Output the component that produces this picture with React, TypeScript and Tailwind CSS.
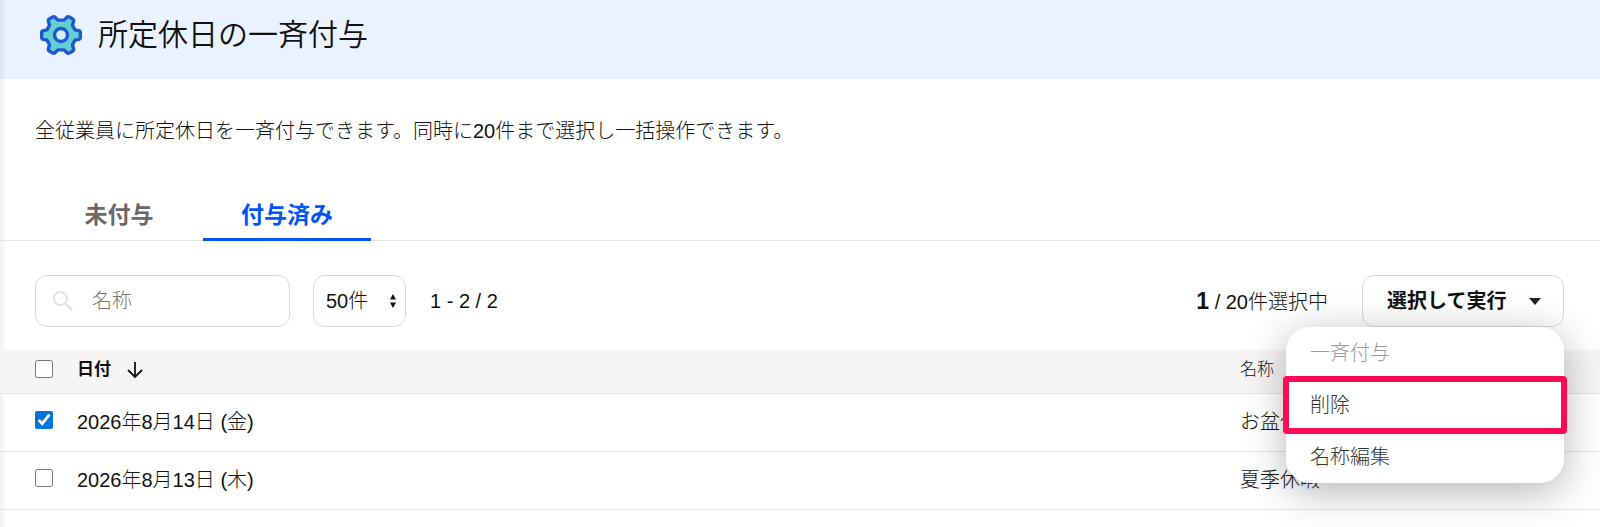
import { useState } from "react";

interface Holiday {
  id: number;
  date: string;
  name: string;
}

const holidays: Holiday[] = [
  { id: 1, date: "2026年8月14日 (金)", name: "お盆休み" },
  { id: 2, date: "2026年8月13日 (木)", name: "夏季休暇" },
];

const GearIcon = () => (
  <svg viewBox="0 0 42 42" className="size-[42px]" fill="none" stroke="#1f57cf" strokeWidth="3.4" strokeLinejoin="round" aria-hidden="true">
    <path
      fill="#62d0d2"
      d="M35 15.8 L38.8 16.6 Q40.3 17 40.3 18.5 V23.5 Q40.3 25 38.8 25.4 L35 26.2 L32.4 30.8 L33.6 34.8 Q34 36.2 32.7 37 L29.2 39.1 Q28 39.7 27 38.7 L24.1 35.9 H17.9 L15 38.7 Q14 39.7 12.8 39.1 L9.3 37 Q8 36.2 8.4 34.8 L9.6 30.8 L7 26.2 L3.2 25.4 Q1.7 25 1.7 23.5 V18.5 Q1.7 17 3.2 16.6 L7 15.8 L9.6 11.2 L8.4 7.2 Q8 5.8 9.3 5 L12.8 2.9 Q14 2.3 15 3.3 L17.9 6.1 H24.1 L27 3.3 Q28 2.3 29.2 2.9 L32.7 5 Q34 5.8 33.6 7.2 L32.4 11.2 Z"
    />
    <circle cx="21" cy="21" r="6.5" fill="#d0f2f3" />
  </svg>
);

const Header = () => (
  <header className="flex h-[79px] items-start gap-4 bg-[#eaf2ff] pt-3.5 pl-10 shadow-[inset_8px_0_8px_-8px_rgba(0,0,0,0.12)]">
    <GearIcon />
    <h1 className="text-[30px] leading-[42px] font-[350]">所定休日の一斉付与</h1>
  </header>
);

const Tabs = () => (
  <nav className="mt-[46px] flex h-[49px] border-b border-[#e5e5e5] pl-[35px] text-[23px] leading-[46px] font-bold">
    <a href="#pending" className="w-[168px] text-center text-[#6b6765]">
      未付与
    </a>
    <a href="#granted" className="-mb-px w-[168px] border-b-[3px] border-[#0055f5] text-center text-[#0055f5]">
      付与済み
    </a>
  </nav>
);

const ActionMenu = () => (
  <div className="relative ml-[34px]">
    <button type="button" aria-haspopup="menu" aria-expanded="true" className="flex h-[52px] w-[202px] items-center justify-between rounded-xl border border-[#d9d9d9] pr-[22px] pl-6 font-bold">
      選択して実行
      <svg viewBox="0 0 12 7" className="h-[7px] w-3" fill="#222" aria-hidden="true">
        <path d="M0 0H12L6 7Z" />
      </svg>
    </button>
    <ul className="absolute top-full right-0 z-10 w-[278px] rounded-3xl bg-white text-[#333] shadow-[0_8px_40px_rgba(0,0,0,0.3)]">
      <li>
        <button type="button" disabled className="h-[52px] w-full px-6 text-left font-light text-[#999]">
          一斉付与
        </button>
      </li>
      <li className="relative">
        <button type="button" className="h-[52px] w-full px-6 text-left font-light">
          削除
        </button>
        <span className="pointer-events-none absolute -inset-[3px] rounded border-[6px] border-[#ff0a54]" />
      </li>
      <li>
        <button type="button" className="h-[52px] w-full px-6 text-left font-light">
          名称編集
        </button>
      </li>
    </ul>
  </div>
);

const Toolbar = () => (
  <div className="mt-[34px] flex items-center pr-9 pl-[35px]">
    <div className="relative">
      <svg viewBox="0 0 20 20" className="absolute top-4 left-[18px] size-5" fill="none" stroke="#e2e2e2" strokeWidth="2" aria-hidden="true">
        <circle cx="7.5" cy="7.5" r="6.5" />
        <path strokeWidth="2.6" d="M12.5 12.5L19 19" />
      </svg>
      <input type="text" aria-label="名称" placeholder="名称" className="h-[52px] w-[255px] rounded-xl border border-[#d9d9d9] pr-4 pl-14 font-light outline-none placeholder:text-[#777]" />
    </div>
    <div className="relative ml-[23px]">
      <select aria-label="表示件数" className="h-[52px] w-[93px] appearance-none rounded-xl border border-[#d9d9d9] bg-white pl-3 font-light">
        <option>50件</option>
      </select>
      <svg viewBox="0 0 6 14" className="pointer-events-none absolute top-[19px] right-2.5 h-3.5 w-1.5" fill="#111" aria-hidden="true">
        <path d="M0 5.5L3 0L6 5.5ZM0 8.5H6L3 14Z" />
      </svg>
    </div>
    <p className="ml-6">1 - 2 / 2</p>
    <p className="ml-auto font-light">
      <b className="text-[23px] font-bold">1</b> / 20件選択中
    </p>
    <ActionMenu />
  </div>
);

const App = () => {
  const [selected, setSelected] = useState<number[]>([1]);

  const toggle = (id: number) => {
    setSelected((prev) => (prev.includes(id) ? prev.filter((v) => v !== id) : [...prev, id]));
  };

  return (
    <div className="min-h-screen overflow-hidden bg-white font-['Liberation_Sans','Noto_Sans_CJK_JP',sans-serif] text-xl text-[#111] shadow-[inset_8px_0_8px_-8px_rgba(0,0,0,0.12)]">
      <Header />
      <main>
        <p className="mt-[37px] pl-[35px] leading-[30px] font-light">全従業員に所定休日を一斉付与できます。同時に20件まで選択し一括操作できます。</p>
        <Tabs />
        <Toolbar />
        <table className="mt-[23px] w-full table-fixed border-collapse text-left">
          <thead>
            <tr className="h-[43px] border-b border-[#e5e5e5] bg-[#f6f4f5] text-[17px]">
              <th className="w-[77px] pb-1 pl-[35px]">
                <input type="checkbox" aria-label="すべて選択" className="block size-[18px]" />
              </th>
              <th className="pb-0.5 font-bold">
                <button type="button" className="flex items-center gap-4">
                  日付
                  <svg viewBox="0 0 16 16" className="size-4" fill="none" stroke="#111" strokeWidth="1.8" aria-hidden="true">
                    <path d="M8 0V15M1 8L8 15L15 8" />
                  </svg>
                </button>
              </th>
              <th className="w-[360px] pb-0.5 font-light">名称</th>
            </tr>
          </thead>
          <tbody>
            {holidays.map(({ id, date, name }) => (
              <tr key={id} className="h-[58px] border-b border-[#e5e5e5] font-light">
                <td className="pb-1 pl-[35px]">
                  <input type="checkbox" aria-label={date} checked={selected.includes(id)} onChange={() => toggle(id)} className="block size-[18px] accent-[#0075d7]" />
                </td>
                <td>{date}</td>
                <td>{name}</td>
              </tr>
            ))}
          </tbody>
        </table>
      </main>
    </div>
  );
};

export default App;
